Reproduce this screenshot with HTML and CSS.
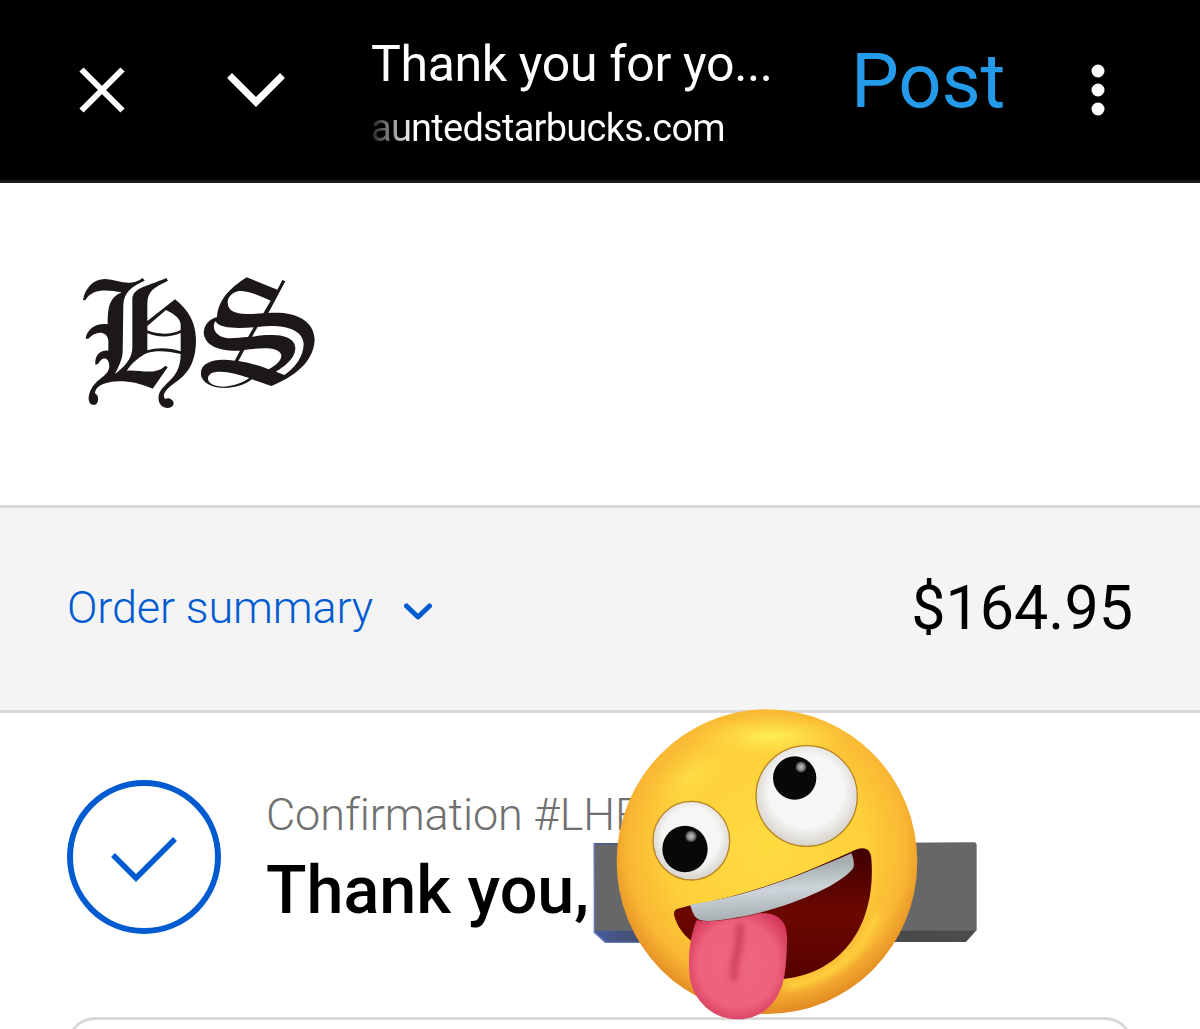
FILE: index.html
```html
<!DOCTYPE html>
<html lang="en">
<head>
    <meta charset="UTF-8">
    <meta name="viewport" content="width=device-width, initial-scale=1.0">
    <title>Thank you for your purchase</title>
    <link rel="stylesheet" href="styles.css">
</head>
<body>
    <header class="browser-bar">
        <svg class="close-icon" viewBox="0 0 46 46"><path d="M2.5 2.5l41 41M43.5 2.5l-41 41"/></svg>
        <svg class="down-icon" viewBox="0 0 58 34"><path d="M2.5 2.5L29 29 55.500 2.500"/></svg>
        <div class="page-info">
            <div class="page-title">Thank you for yo...</div>
            <div class="page-url">auntedstarbucks.com</div>
        </div>
        <div class="post">Post</div>
        <svg class="menu-icon" viewBox="0 0 14 52"><circle cx="7" cy="7" r="6.500"/><circle cx="7" cy="26" r="6.500"/><circle cx="7" cy="45" r="6.500"/></svg>
    </header>

    <div class="shop-header">
        <svg class="logo" viewBox="0 0 840 480">
            <!-- left emblem -->
            <path d="M69 120C75 82 104 56 136 57C174 60 211 82 248 54L254 62C218 78 191 95 190 135L188 275C187 300 176 318 165 342C190 322 217 300 217 262V120C218 82 255 82 319 54L324 62C281 82 263 94 262 130V183L345 118C379 145 408 181 408 242C407 318 376 347 337 374C313 391 306 407 316 417C326 410 342 420 341 431C336 451 300 448 296 421C290 368 362 370 362 282C328 273 287 270 262 279C240 289 217 307 200 332C240 328 282 348 317 317L323 322L278 386C235 367 189 360 151 366C117 372 105 387 105 400C119 407 117 433 103 435C80 434 84 404 94 387C111 354 146 350 148 319C147 288 125 289 114 312L106 314C104 287 119 270 145 272V240C139 210 105 214 85 236L77 236C80 206 112 187 143 193C144 152 143 115 185 97C147 90 97 82 76 121ZM262 198V211C291 224 333 225 362 210V200C365 177 344 163 318 150ZM262 220V271C289 262 331 263 362 274V219C332 233 290 232 262 220Z"/>
            <!-- right emblem -->
            <path d="M560 52L652 89L667 60L676 64L625 159C691 153 763 172 764 241C760 308 701 351 634 378L576 358C541 388 445 399 424 350C414 309 461 292 524 302L540 272C491 275 433 263 431 217C433 195 447 177 471 171C475 119 510 84 560 52ZM632 122C597 106 562 91 536 93C508 99 496 123 507 143C521 166 569 163 610 160ZM466 184C456 198 461 228 499 234C520 236 541 232 564 231L581 202C535 205 480 207 466 184ZM593 201L576 230C631 222 703 219 706 264C706 298 667 323 648 335L673 345C704 324 731 290 731 251C727 202 658 192 593 201ZM553 270L535 303C563 307 594 315 626 328C649 315 664 303 664 286C659 258 596 264 553 270ZM568 354C530 342 486 328 455 339C433 353 444 379 487 380C520 379 547 369 568 354Z"/>
        </svg>
    </div>

    <div class="order-summary">
        <div class="summary-toggle">
            <span>Order summary</span>
            <svg class="toggle-icon" viewBox="0 0 28 17"><path d="M2.500 3L14 14 25.500 3"/></svg>
        </div>
        <div class="total">$164.95</div>
    </div>

    <main class="content">
        <div class="confirmation">
            <svg class="check-icon" viewBox="0 0 154 154">
                <circle cx="77" cy="77" r="74"/>
                <path d="M46 75L69 98 108 59"/>
            </svg>
            <div class="confirmation-text">
                <p class="order-number">Confirmation #LHF</p>
                <h1>Thank you,</h1>
            </div>
        </div>
        <div class="card-top">
            <div class="card"></div>
        </div>

        <svg class="sticker" viewBox="0 0 1230 987">
            <defs>
                <radialGradient id="face" cx=".5" cy=".45" r=".56">
                    <stop offset="0" stop-color="#ffdb40"/>
                    <stop offset=".58" stop-color="#fed03a"/>
                    <stop offset=".83" stop-color="#f9b733"/>
                    <stop offset="1" stop-color="#df8422"/>
                </radialGradient>
                <radialGradient id="shine">
                    <stop offset="0" stop-color="#fff95e"/>
                    <stop offset="1" stop-color="#ffe448" stop-opacity="0"/>
                </radialGradient>
                <radialGradient id="eye" cx=".5" cy=".45" r=".56">
                    <stop offset=".65" stop-color="#f6f6f5"/>
                    <stop offset="1" stop-color="#d4d0c9"/>
                </radialGradient>
                <radialGradient id="glint">
                    <stop offset="0" stop-color="#c4c4c4"/>
                    <stop offset=".6" stop-color="#858585"/>
                    <stop offset="1" stop-color="#222"/>
                </radialGradient>
                <linearGradient id="teeth" x1=".4" y1="0" x2=".55" y2="1">
                    <stop offset=".2" stop-color="#a5adb0"/>
                    <stop offset=".55" stop-color="#cdd5da"/>
                    <stop offset="1" stop-color="#a1a8ac"/>
                </linearGradient>
                <radialGradient id="tongue" cx=".5" cy=".48" r=".62">
                    <stop offset="0" stop-color="#ee6680"/>
                    <stop offset=".65" stop-color="#ed627c"/>
                    <stop offset="1" stop-color="#cf2f55"/>
                </radialGradient>
                <linearGradient id="mouth" x1="0" y1="0" x2="0" y2="1">
                    <stop offset="0" stop-color="#3f0000"/>
                    <stop offset=".5" stop-color="#6c0800"/>
                    <stop offset="1" stop-color="#560000"/>
                </linearGradient>
                <linearGradient id="bar-edge">
                    <stop offset="0" stop-color="#465b9d"/>
                    <stop offset=".2" stop-color="#45464d"/>
                    <stop offset="1" stop-color="#4b4b4d"/>
                </linearGradient>
                <filter id="soft" filterUnits="userSpaceOnUse" x="0" y="0" width="1230" height="987"><feGaussianBlur stdDeviation="10"/></filter>
            </defs>
            <path fill="url(#bar-edge)" d="M41 429H1188V692L1158 726H76L43 697Z"/>
            <path fill="#666769" d="M45 433L1182 427Q1190 427 1190 435V692H45Z"/>
            <path class="bar-outline" d="M43 431V697L76 727H180"/>
            <ellipse fill="url(#face)" cx="561" cy="485" rx="451" ry="457"/>
            <ellipse fill="url(#shine)" opacity=".8" cx="575" cy="108" rx="240" ry="65"/>
            <ellipse fill="url(#shine)" opacity=".35" cx="330" cy="230" rx="170" ry="80" transform="rotate(-40 330 230)"/>
            <path class="chin-shine" d="M620 858C750 838 850 760 893 640"/>
            <ellipse class="eye" cx="334" cy="422" rx="115" ry="118"/>
            <ellipse class="eye" cx="680" cy="288" rx="152" ry="151"/>
            <ellipse class="pupil" cx="315" cy="447" rx="68" ry="70"/>
            <circle class="pupil" cx="644" cy="234" r="65"/>
            <circle fill="url(#glint)" cx="333" cy="409" r="18"/>
            <circle fill="url(#glint)" cx="663" cy="201" r="17"/>
            <path fill="url(#mouth)" d="M290 627L335 615C505 588 665 522 814 455C843 439 871 439 874 475C889 664 797 817 610 837L420 770C350 739 300 711 282 645Q280 632 290 627Z"/>
            <path fill="url(#teeth)" d="M330 614C505 590 664 525 814 460C820 473 824 489 820 504C768 575 526 658 382 663C339 660 341 641 330 614Z"/>
            <path fill="url(#tongue)" d="M350 661C390 668 461 660 540 640C589 635 621 662 621 708C621 770 616 827 607 854C582 928 530 960 466 958C404 955 347 910 331 842C320 777 332 701 350 661Z"/>
            <path class="tongue-line" d="M480 670C484 728 461 778 461 842"/>
        </svg>
    </main>
</body>
</html>
```
FILE: styles.css
```css
:root {
    --blue: #005bd1;
    --line: #d9d9d9;
}

* {
    box-sizing: border-box;
}

body {
    margin: 0;
    font-family: Roboto, sans-serif;
    background-color: #fff;
    color: #000;
}

svg {
    display: block;
    flex-shrink: 0;
}

.browser-bar {
    display: flex;
    align-items: center;
    height: 183px;
    padding-left: 79px;
    background-color: #000;
    border-bottom: 3px solid #1b1b1c;
    color: #fff;
}

.close-icon,
.down-icon,
.toggle-icon,
.check-icon {
    fill: none;
    stroke: #fff;
    stroke-width: 6;
}

.close-icon {
    width: 46px;
    height: 46px;
}

.down-icon {
    width: 58px;
    height: 34px;
    margin-left: 102px;
    stroke-width: 7;
}

.page-info {
    width: 420px;
    height: 180px;
    margin-left: 86px;
    padding-top: 34px;
    white-space: nowrap;
}

.page-title {
    font-size: 50px;
    line-height: 60px;
    letter-spacing: -0.35px;
}

.page-url {
    margin-top: 14px;
    font-size: 38px;
    line-height: 40px;
    letter-spacing: -0.75px;
    background: linear-gradient(90deg, #222, #fff 42px);
    background-clip: text;
    color: transparent;
}

.post {
    width: 150px;
    height: 180px;
    margin-left: 60px;
    padding-top: 36px;
    font-size: 76px;
    line-height: 90px;
    letter-spacing: -0.2px;
    color: #239bea;
}

.menu-icon {
    width: 14px;
    height: 52px;
    margin-left: 90px;
    fill: #fff;
}

.shop-header {
    height: 322px;
    padding: 77px 60px;
}

.logo {
    width: 280px;
    height: 160px;
    fill: #1c1718;
    fill-rule: evenodd;
}

.order-summary {
    display: flex;
    align-items: center;
    justify-content: space-between;
    height: 208px;
    padding: 0 67px 3px;
    background-color: #f4f4f4;
    border-top: 3px solid var(--line);
    border-bottom: 3px solid var(--line);
}

.summary-toggle {
    display: flex;
    align-items: center;
    gap: 31px;
    font-size: 45px;
    font-weight: 300;
    letter-spacing: -0.15px;
    color: var(--blue);
}

.toggle-icon {
    width: 28px;
    height: 17px;
    margin-top: 8px;
    stroke: var(--blue);
    stroke-width: 5;
    stroke-linecap: round;
    stroke-linejoin: round;
}

.total {
    font-size: 61px;
}

.content {
    position: relative;
    height: 316px;
    padding: 67px 67px 0;
}

.confirmation {
    display: flex;
    gap: 45px;
    height: 237px;
}

.check-icon {
    width: 154px;
    height: 154px;
    stroke: var(--blue);
}

.check-icon path {
    stroke-width: 5.5;
}

.confirmation-text {
    white-space: nowrap;
}

.order-number {
    margin: 7px 0 0;
    font-size: 45px;
    font-weight: 300;
    line-height: 56px;
    letter-spacing: -0.1px;
    color: #707070;
}

h1 {
    margin: 7px 0 0;
    font-size: 66.5px;
    font-weight: 500;
    line-height: 80px;
}

/* only the top edge of the card shows */
.card-top {
    height: 12px;
    overflow: hidden;
}

.card {
    height: 80px;
    border: 3px solid var(--line);
    border-radius: 28px;
}

/* sticker lies over the customer details */
.sticker {
    position: absolute;
    left: 580px;
    top: -13px;
    width: 410px;
    height: 329px;
}

.bar-outline {
    fill: none;
    stroke: #6679b8;
    stroke-width: 4;
}

.chin-shine {
    fill: none;
    stroke: #ffd33f;
    stroke-width: 22;
    filter: url(#soft);
}

.eye {
    fill: url(#eye);
    stroke: #b98322;
    stroke-width: 4;
}

.pupil {
    fill: #070808;
}

.tongue-line {
    fill: none;
    stroke: #c83c5c;
    stroke-width: 20;
    filter: url(#soft);
}
```
